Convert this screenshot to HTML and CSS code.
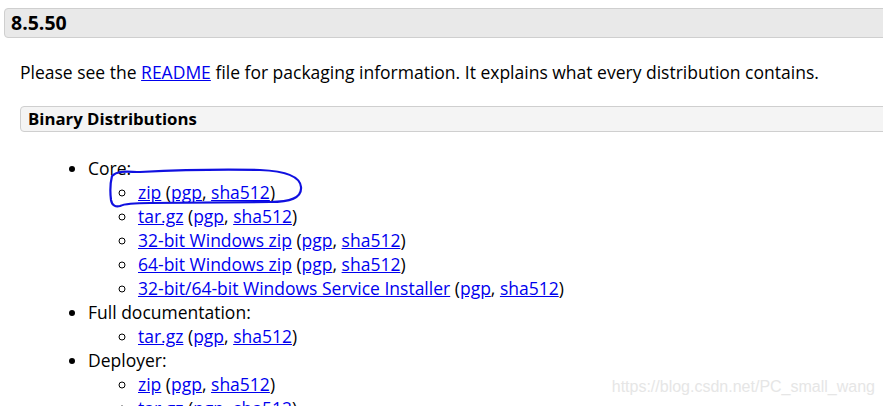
FILE: index.html
```html
<!DOCTYPE html>
<html>
<head>
<meta charset="utf-8">
<link rel="stylesheet" href="styles.css">
</head>
<body>
<h3 class="version">8.5.50</h3>
<div class="content">
  <p class="intro">Please see the <a href="#">README</a> file for packaging information. It explains what every distribution contains.</p>
  <h4 class="subhead">Binary Distributions</h4>
  <ul class="dist">
    <li>Core:
      <ul>
        <li><a href="#">zip</a> (<a href="#">pgp</a>, <a href="#">sha512</a>)</li>
        <li><a href="#">tar.gz</a> (<a href="#">pgp</a>, <a href="#">sha512</a>)</li>
        <li><a href="#">32-bit Windows zip</a> (<a href="#">pgp</a>, <a href="#">sha512</a>)</li>
        <li><a href="#">64-bit Windows zip</a> (<a href="#">pgp</a>, <a href="#">sha512</a>)</li>
        <li><a href="#">32-bit/64-bit Windows Service Installer</a> (<a href="#">pgp</a>, <a href="#">sha512</a>)</li>
      </ul>
    </li>
    <li>Full documentation:
      <ul>
        <li><a href="#">tar.gz</a> (<a href="#">pgp</a>, <a href="#">sha512</a>)</li>
      </ul>
    </li>
    <li>Deployer:
      <ul>
        <li><a href="#">zip</a> (<a href="#">pgp</a>, <a href="#">sha512</a>)</li>
        <li><a href="#">tar.gz</a> (<a href="#">pgp</a>, <a href="#">sha512</a>)</li>
      </ul>
    </li>
  </ul>
</div>
<svg class="annot" width="883" height="406" viewBox="0 0 883 406">
  <path d="M112 176 C 118 170, 128 172, 140 172 C 180 170, 220 169, 260 170 C 285 171, 300 176, 301 187 C 302 198, 290 202, 270 202 L 150 203 C 135 203, 124 204, 120 206 C 116 207, 112 206, 111 200 C 110 192, 110 184, 112 176 Z" fill="none" stroke="#1010e0" stroke-width="2.2" stroke-linecap="round"/>
</svg>
<div class="watermark">https://blog.csdn.net/PC_small_wang</div>
</body>
</html>
```
FILE: styles.css
```css
html, body {
  margin: 0;
  padding: 0;
  background: #fff;
  overflow: hidden;
}
body {
  font-family: "Open Sans", "DejaVu Sans", sans-serif;
  font-size: 17.5px;
  color: #000;
  width: 883px;
  height: 406px;
  position: relative;
}
a {
  color: #0000ee;
  text-decoration: underline;
}
.version {
  margin: 8px -10px 0 4px;
  height: 28px;
  line-height: 28px;
  padding: 0 6px;
  font-size: 19.5px;
  font-weight: 700;
  background: #e9e9e9;
  border: 1px solid #cfcfcf;
  border-radius: 4px 0 0 4px;
}
.content {
  padding-left: 20px;
}
.intro {
  margin: 22px 0 0 0;
  line-height: 24px;
}
.subhead {
  margin: 22px -10px 0 0;
  height: 24px;
  line-height: 24px;
  padding: 0 7px;
  font-size: 16.8px;
  font-weight: 700;
  background: #f4f4f4;
  border: 1px solid #cfcfcf;
  border-radius: 4px 0 0 4px;
}
.dist {
  margin: 24px 0 0 0;
  padding-left: 68px;
  line-height: 24px;
  list-style: disc;
}
.dist ul {
  margin: 0;
  padding-left: 50px;
  list-style: circle;
}
.annot {
  position: absolute;
  left: 0;
  top: 0;
  pointer-events: none;
}
.watermark {
  position: absolute;
  right: 8px;
  top: 378px;
  font-family: "Liberation Sans", Arial, sans-serif;
  font-size: 16px;
  color: #e6e6e6;
}
```
